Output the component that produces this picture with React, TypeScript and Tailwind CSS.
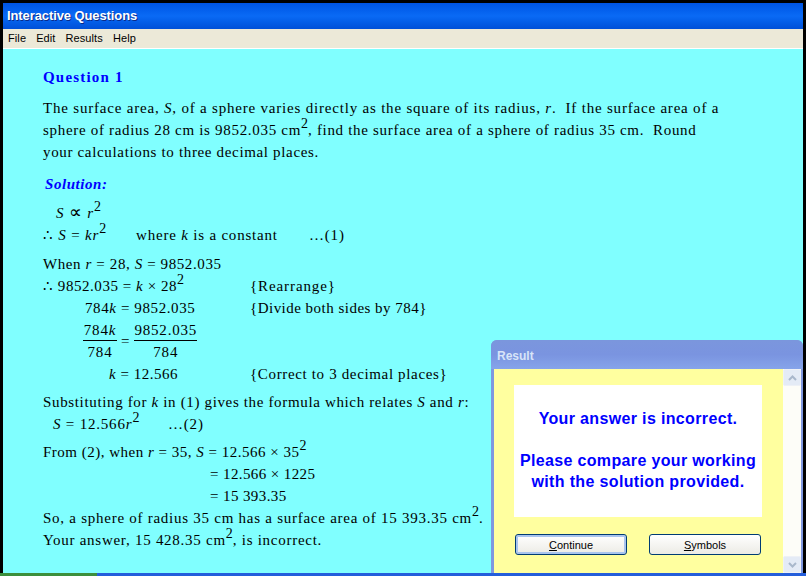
import React from 'react';

const Sup = ({ children }: { children: React.ReactNode }) => (
  <span className="relative top-[-7px] align-baseline text-[14px] leading-none tracking-normal">{children}</span>
);

const I = ({ children }: { children: React.ReactNode }) => <i>{children}</i>;

function Line({ className = '', children }: { className?: string; children: React.ReactNode }) {
  return <div className={`h-[22px] leading-[22px] whitespace-pre ${className}`}>{children}</div>;
}

function WorkingRow({
  indent,
  note,
  noteClass = '',
  children,
}: {
  indent: string;
  note?: string;
  noteClass?: string;
  children: React.ReactNode;
}) {
  return (
    <div className="flex h-[22px] leading-[22px] whitespace-pre">
      <div className={`w-[207px] shrink-0 ${indent}`}>{children}</div>
      {note && <div className={noteClass}>{note}</div>}
    </div>
  );
}

function XpButton({ first, rest, focused }: { first: string; rest: string; focused?: boolean }) {
  return (
    <button
      className={`h-[21px] w-[112px] rounded-[3px] border border-[#003c74] bg-gradient-to-b from-white to-[#ecebe5] pt-[1px] text-[11px] leading-none text-black ${focused ? 'shadow-[inset_0_0_0_2px_#a9c4ee]' : ''}`}
      style={{ fontFamily: '"Liberation Sans", Arial, sans-serif' }}
    >
      <span className="underline">{first}</span>
      {rest}
    </button>
  );
}

export default function App() {
  return (
    <div className="relative flex h-[576px] w-[806px] flex-col overflow-hidden bg-black pt-[3px] pl-[3px] pr-[3px]">
      {/* Title bar */}
      <div
        className="flex h-[26px] shrink-0 items-center bg-gradient-to-b from-[#0054e3] via-[#0a6af5] to-[#0050d8] pl-[4px] text-[13px] font-bold tracking-[-0.1px] text-white [text-shadow:1px_1px_0_#0a2a8a]"
        style={{ fontFamily: '"Liberation Sans", Arial, sans-serif' }}
      >
        Interactive Questions
      </div>

      {/* Menu bar */}
      <div
        className="flex h-[19px] shrink-0 items-center gap-[10px] bg-[#ece9d8] pl-[5px] text-[11px] tracking-[0.1px] text-black"
        style={{ fontFamily: '"Liberation Sans", Arial, sans-serif' }}
      >
        <span>File</span>
        <span>Edit</span>
        <span>Results</span>
        <span>Help</span>
      </div>
      <div className="h-px shrink-0 bg-white" />

      {/* Question body */}
      <div
        className="h-[524px] shrink-0 bg-[#80ffff] pl-[40px] pt-[17px] text-[15px] tracking-[0.8px] text-black"
        style={{ fontFamily: '"Liberation Serif", "Times New Roman", serif' }}
      >
        <Line className="font-bold tracking-[1.2px] text-[#0000ff]">Question 1</Line>
        <div className="h-[9px]" />
        <Line>
          The surface area, <I>S</I>, of a sphere varies directly as the square of its radius, <I>r</I>.  If the surface area of a
        </Line>
        <Line className="tracking-[0.69px]">
          sphere of radius 28 cm is 9852.035 cm<Sup>2</Sup>, find the surface area of a sphere of radius 35 cm.  Round
        </Line>
        <Line className="tracking-[0.66px]">your calculations to three decimal places.</Line>
        <div className="h-[10px]" />
        <Line className="pl-[2px] font-bold italic tracking-[0.55px] text-[#0000ff]">Solution:</Line>
        <div className="h-[7px]" />
        <Line className="pl-[13px]">
          <I>S</I> <span className="text-[18px] leading-none">∝</span> <I>r</I><Sup>2</Sup>
        </Line>
        <div className="flex h-[22px] leading-[22px] whitespace-pre">
          <div className="w-[93px] shrink-0">
            ∴ <I>S</I> = <I>kr</I><Sup>2</Sup>
          </div>
          <div className="w-[173px] shrink-0">
            where <I>k</I> is a constant
          </div>
          <div>…(1)</div>
        </div>
        <div className="h-[7px]" />
        <Line className="tracking-[0.6px]">
          When <I>r</I> = 28, <I>S</I> = 9852.035
        </Line>
        <WorkingRow indent="tracking-[0.55px]" note="{Rearrange}" noteClass="tracking-[0.9px]">
          ∴ 9852.035 = <I>k</I> × 28<Sup>2</Sup>
        </WorkingRow>
        <WorkingRow indent="pl-[42px] tracking-[0.6px]" note="{Divide both sides by 784}" noteClass="tracking-[0.48px]">
          784<I>k</I> = 9852.035
        </WorkingRow>

        {/* Fraction line */}
        <div className="flex h-[44px] items-center pl-[40px]">
          <div className="flex w-[34px] flex-col items-center">
            <div className="h-[21px] w-full border-b border-black text-center leading-[21px]">784<I>k</I></div>
            <div className="h-[22px] leading-[23px]">784</div>
          </div>
          <span className="mx-[4px]">=</span>
          <div className="flex w-[63px] flex-col items-center">
            <div className="h-[21px] w-full border-b border-black text-center leading-[21px]">9852.035</div>
            <div className="h-[22px] leading-[23px]">784</div>
          </div>
        </div>

        <WorkingRow indent="pl-[66px] tracking-[0.5px]" note="{Correct to 3 decimal places}" noteClass="tracking-[0.65px]">
          <I>k</I> = 12.566
        </WorkingRow>
        <div className="h-[6px]" />
        <Line className="tracking-[0.65px]">
          Substituting for <I>k</I> in (1) gives the formula which relates <I>S</I> and <I>r</I>:
        </Line>
        <div className="flex h-[22px] leading-[22px] whitespace-pre pl-[10px]">
          <div className="w-[115px] shrink-0">
            <I>S</I> = 12.566<I>r</I><Sup>2</Sup>
          </div>
          <div>…(2)</div>
        </div>
        <div className="h-[6px]" />
        <Line className="tracking-[0.5px]">
          From (2), when <I>r</I> = 35, <I>S</I> = 12.566 × 35<Sup>2</Sup>
        </Line>
        <Line className="pl-[167px] tracking-[0.4px]">= 12.566 × 1225</Line>
        <Line className="pl-[167px] tracking-[0.4px]">= 15 393.35</Line>
        <Line className="tracking-[0.74px]">
          So, a sphere of radius 35 cm has a surface area of 15 393.35 cm<Sup>2</Sup>.
        </Line>
        <Line className="tracking-[0.73px]">
          Your answer, 15 428.35 cm<Sup>2</Sup>, is incorrect.
        </Line>
      </div>

      {/* Taskbar sliver */}
      <div className="-mx-[3px] flex h-[3px] shrink-0">
        <div className="w-[97px] bg-[#3c8f3c]" />
        <div className="flex-1 bg-[#245edb]" />
      </div>

      {/* Result window */}
      <div className="absolute left-[491px] top-[340px] flex h-[233px] w-[312px] flex-col rounded-t-[6px] bg-[#7f97de]">
        <div
          className="flex h-[29px] shrink-0 items-center rounded-t-[6px] bg-gradient-to-b from-[#7b96dd] via-[#7a94e0] to-[#86a4ea] pl-[6px] pt-[3px] text-[12px] font-bold text-[#d8e4f8]"
          style={{ fontFamily: '"Liberation Sans", Arial, sans-serif' }}
        >
          Result
        </div>
        <div className="ml-[3px] mr-[2px] flex min-h-0 flex-1 bg-[#ffff9f]">
          <div className="flex flex-1 flex-col pl-[20px] pt-[16px]">
            <div
              className="flex h-[132px] w-[248px] flex-col items-center justify-center bg-white pb-[2px] text-center text-[16px] font-bold leading-[21px] tracking-[0.35px] text-[#0000ff]"
              style={{ fontFamily: '"Liberation Sans", Arial, sans-serif' }}
            >
              <div>Your answer is incorrect.</div>
              <div className="h-[21px]" />
              <div>Please compare your working</div>
              <div>with the solution provided.</div>
            </div>
            <div className="mt-[17px] flex gap-[22px] pl-[1px]">
              <XpButton first="C" rest="ontinue" focused />
              <XpButton first="S" rest="ymbols" />
            </div>
          </div>
          <div className="flex w-[18px] shrink-0 flex-col justify-between bg-[#fdfdf8]">
            <div className="flex h-[17px] items-center justify-center rounded-[2px] border border-[#eef1f6] bg-[#e4ebf6] text-[#a9b8cc]">
              <svg width="9" height="6" viewBox="0 0 9 6"><path d="M1 5l3.5-3.5L8 5" fill="none" stroke="currentColor" strokeWidth="2" /></svg>
            </div>
            <div className="flex h-[17px] items-center justify-center rounded-[2px] border border-[#eef1f6] bg-[#e4ebf6] text-[#a9b8cc]">
              <svg width="9" height="6" viewBox="0 0 9 6"><path d="M1 1l3.5 3.5L8 1" fill="none" stroke="currentColor" strokeWidth="2" /></svg>
            </div>
          </div>
        </div>
      </div>
    </div>
  );
}
